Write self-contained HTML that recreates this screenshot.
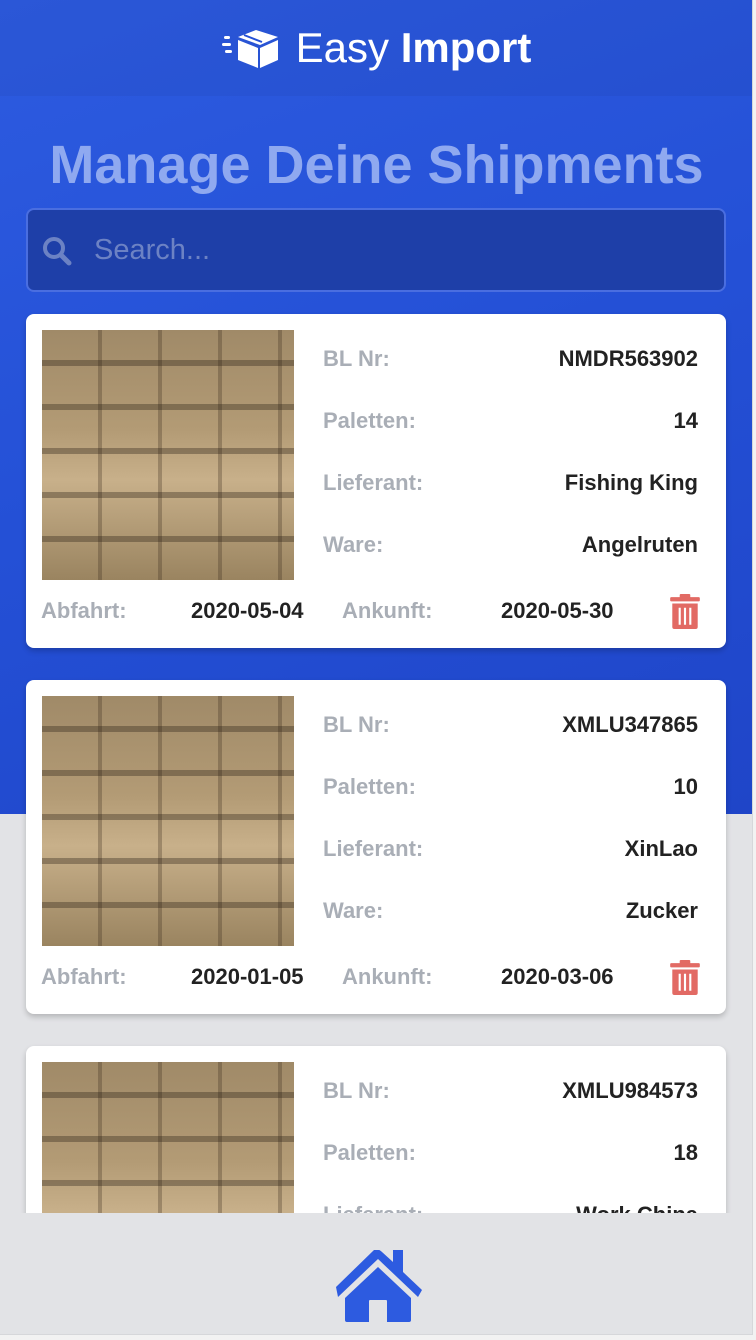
<!DOCTYPE html>
<html><head><meta charset="utf-8"><style>
*{margin:0;padding:0;box-sizing:border-box}
body{width:756px;height:1340px;background:#f2f2f2;font-family:"Liberation Sans",sans-serif;overflow:hidden;position:relative}
#app{position:absolute;left:0;top:0;width:753px;height:1335px;background:#e2e3e6;border-right:1px solid #d6d7da;border-bottom:1px solid #d6d7da;overflow:hidden}
.blue{position:absolute;left:0;top:0;width:753px;height:814px;background:linear-gradient(160deg,#2d5be0 0%,#2450d6 50%,#1f45c8 100%)}
.hdr{position:absolute;left:0;top:0;width:753px;height:96px;background:rgba(0,0,0,0.04);display:flex;align-items:center;justify-content:center;color:#fff;font-size:42px}
.title{position:absolute;top:134px;width:753px;text-align:center;font-size:54px;font-weight:bold;color:#8fa9f0}
.search{position:absolute;left:26px;top:208px;width:700px;height:84px;background:#1e3fa8;border:2px solid #4a6ee0;border-radius:8px;color:#6c82c4;font-size:29px;padding-left:66px;line-height:80px}
.scroll{position:absolute;left:0;top:300px;width:753px;height:913px;overflow:hidden}
.card{position:absolute;left:26px;width:700px;height:334px;background:#fff;border-radius:8px;box-shadow:0 3px 6px rgba(0,0,0,.2)}
.img{position:absolute;left:16px;top:16px;width:252px;height:250px;background:
repeating-linear-gradient(0deg,transparent 0 38px,rgba(40,30,20,.35) 38px 44px),
repeating-linear-gradient(90deg,transparent 0 56px,rgba(60,45,30,.3) 56px 60px),
linear-gradient(180deg,#a08a68,#b39b75 40%,#c8b08a 60%,#9a8460)}
.row{position:absolute;left:297px;width:375px;font-size:22px;display:flex;justify-content:space-between}
.row span:first-child{color:#a9aeb6;font-weight:bold}
.row span:last-child{color:#222;font-weight:bold}
.bot{position:absolute;top:284px;font-size:22px}
.lab{color:#a9aeb6;font-weight:bold}.val{color:#222;font-weight:bold}
.trash{position:absolute;left:643px;top:280px}
.home{position:absolute;left:332px;top:1250px}
</style></head><body>
<div id="app">
<div class="blue"></div>
<div class="hdr">
<svg width="58" height="40" viewBox="0 0 58 40" style="margin-right:16px"><g fill="#fff"><rect x="2" y="8" width="6" height="3" rx="1.5"/><rect x="0" y="15" width="9" height="3" rx="1.5"/><rect x="3" y="22" width="7" height="3" rx="1.5"/><path d="M16 12 L36 20 L36 40 L16 32Z"/><path d="M38 20 L56 12 L56 32 L38 40Z"/><path d="M16 9 L34 2 L56 9 L38 17Z" fill="#fff"/><path d="M22 7 L40 14" stroke="#2450d6" stroke-width="2"/></g></svg>
<span style="font-weight:normal">Easy&nbsp;</span><b>Import</b></div>
<div class="title">Manage Deine Shipments</div>
<div class="search"><svg style="position:absolute;left:14px;top:26px" width="30" height="30" viewBox="0 0 30 30"><circle cx="12" cy="12" r="9" fill="none" stroke="#6c82c4" stroke-width="4"/><path d="M19 19 L27 27" stroke="#6c82c4" stroke-width="5" stroke-linecap="round"/></svg>Search...</div>
<div class="scroll">
<div class="card" style="top:14px"><div class="img"></div>
<div class="row" style="top:32px"><span>BL Nr:</span><span>NMDR563902</span></div>
<div class="row" style="top:94px"><span>Paletten:</span><span>14</span></div>
<div class="row" style="top:156px"><span>Lieferant:</span><span>Fishing King</span></div>
<div class="row" style="top:218px"><span>Ware:</span><span>Angelruten</span></div>
<span class="bot lab" style="left:15px">Abfahrt:</span><span class="bot val" style="left:165px">2020-05-04</span>
<span class="bot lab" style="left:316px">Ankunft:</span><span class="bot val" style="left:475px">2020-05-30</span>
<svg class="trash" width="32" height="36" viewBox="0 0 30 34"><rect x="1" y="3" width="28" height="4" rx="1" fill="#e26a64"/><rect x="10" y="0" width="10" height="5" rx="1" fill="#e26a64"/><path d="M3 9 H27 V31 Q27 33 25 33 H5 Q3 33 3 31Z" fill="#e26a64"/><path d="M10 13V29M15 13V29M20 13V29" stroke="#fff" stroke-width="2"/></svg>
</div>
<div class="card" style="top:380px"><div class="img"></div>
<div class="row" style="top:32px"><span>BL Nr:</span><span>XMLU347865</span></div>
<div class="row" style="top:94px"><span>Paletten:</span><span>10</span></div>
<div class="row" style="top:156px"><span>Lieferant:</span><span>XinLao</span></div>
<div class="row" style="top:218px"><span>Ware:</span><span>Zucker</span></div>
<span class="bot lab" style="left:15px">Abfahrt:</span><span class="bot val" style="left:165px">2020-01-05</span>
<span class="bot lab" style="left:316px">Ankunft:</span><span class="bot val" style="left:475px">2020-03-06</span>
<svg class="trash" width="32" height="36" viewBox="0 0 30 34"><rect x="1" y="3" width="28" height="4" rx="1" fill="#e26a64"/><rect x="10" y="0" width="10" height="5" rx="1" fill="#e26a64"/><path d="M3 9 H27 V31 Q27 33 25 33 H5 Q3 33 3 31Z" fill="#e26a64"/><path d="M10 13V29M15 13V29M20 13V29" stroke="#fff" stroke-width="2"/></svg>
</div>
<div class="card" style="top:746px"><div class="img"></div>
<div class="row" style="top:32px"><span>BL Nr:</span><span>XMLU984573</span></div>
<div class="row" style="top:94px"><span>Paletten:</span><span>18</span></div>
<div class="row" style="top:156px"><span>Lieferant:</span><span>Work China</span></div>
</div>
</div>
<svg class="home" width="92" height="72" viewBox="0 0 92 72"><path d="M4 37 L42 0 Q46 -2 50 2 L61 12 V0 H71 V22 L90 40 L86 47 L46 9 L6 47Z" fill="#2d5be0"/><path d="M46 17 L13 48 V70 Q13 72 15 72 H37 V51 Q37 50 38 50 H54 Q55 50 55 51 V72 H77 Q79 72 79 70 V48Z" fill="#2d5be0"/></svg>
</div>
</body></html>
